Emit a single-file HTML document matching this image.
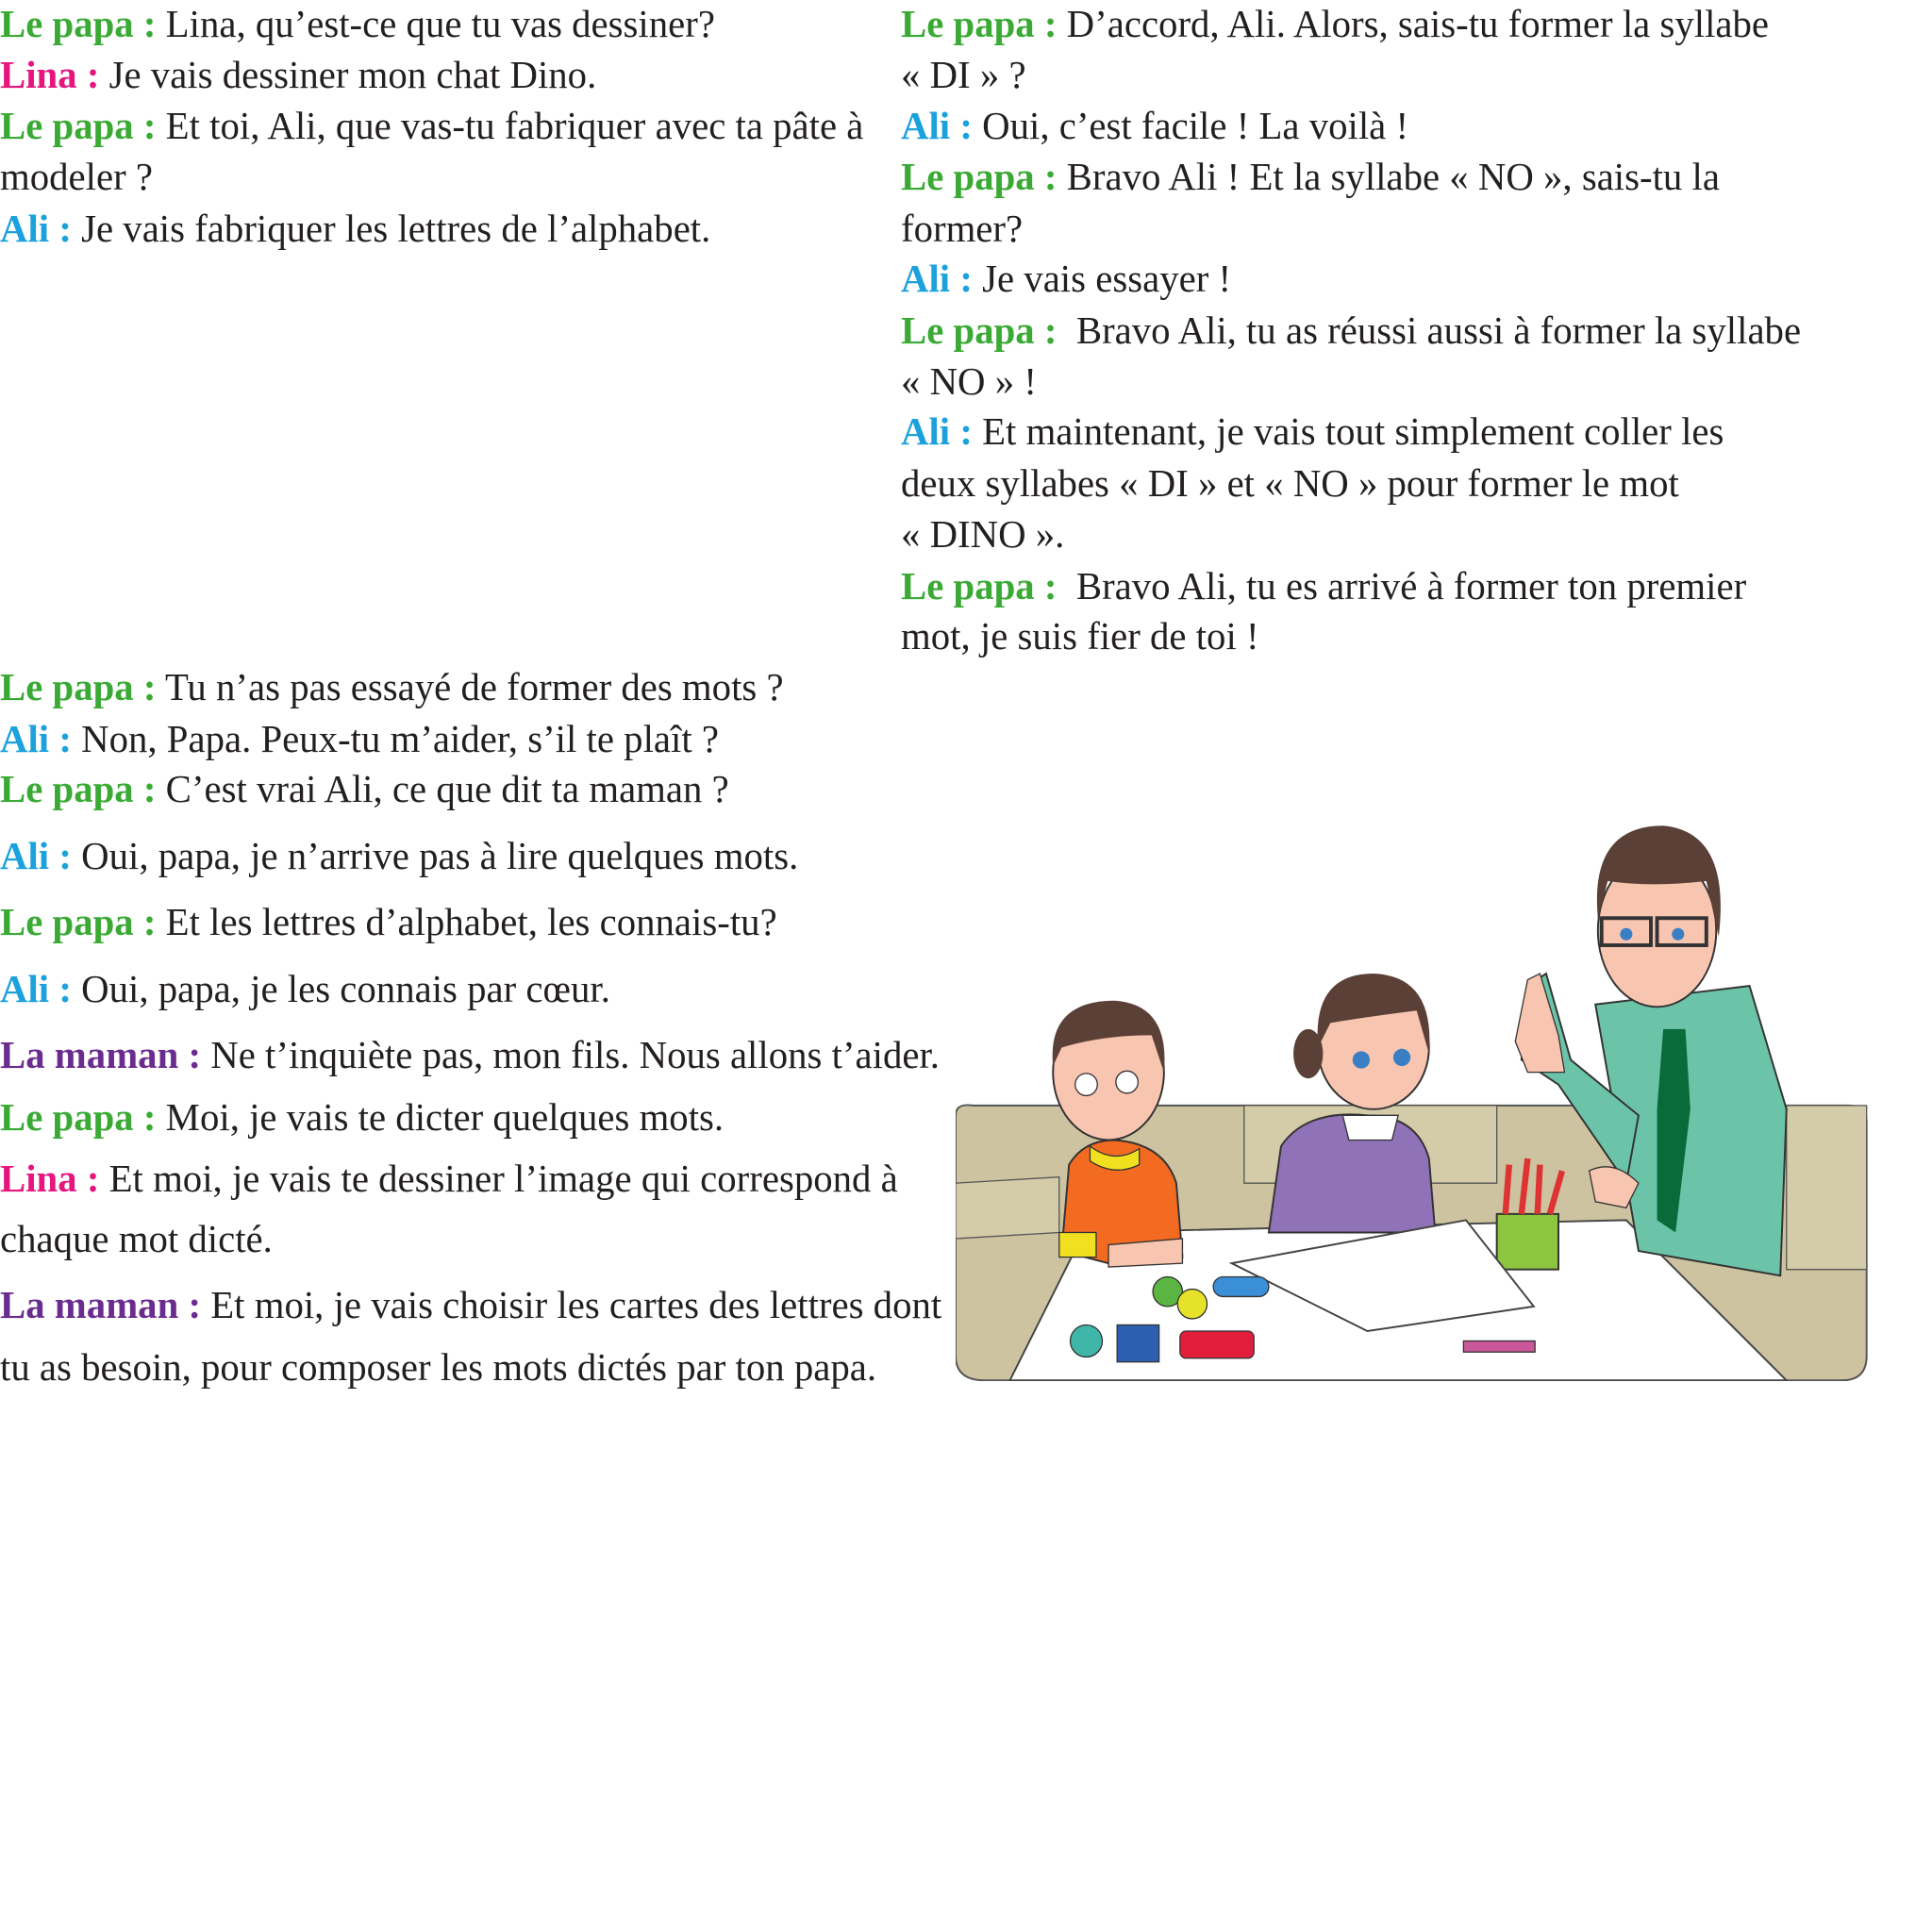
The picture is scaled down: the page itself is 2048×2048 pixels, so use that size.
<!DOCTYPE html>
<html><head><meta charset="utf-8"><style>
html,body{margin:0;padding:0;background:#fff;width:2048px;height:2048px;overflow:hidden;position:relative}
.l{position:absolute;font-family:"Liberation Serif",serif;font-size:40.8px;line-height:40px;white-space:nowrap;color:#231f20}
b{font-weight:bold}
.g{color:#3aaa35}.p{color:#e5177e}.b{color:#1ba1dc}.v{color:#6b2c8f}
</style></head><body>
<div class="l" style="left:0;top:6px"><b class="g">Le papa :</b> Lina, qu’est-ce que tu vas dessiner?</div>
<div class="l" style="left:0;top:60px"><b class="p">Lina :</b> Je vais dessiner mon chat Dino.</div>
<div class="l" style="left:0;top:114px"><b class="g">Le papa :</b> Et toi, Ali, que vas-tu fabriquer avec ta pâte à</div>
<div class="l" style="left:0;top:168px">modeler ?</div>
<div class="l" style="left:0;top:223px"><b class="b">Ali :</b> Je vais fabriquer les lettres de l’alphabet.</div>

<div class="l" style="left:955px;top:6px"><b class="g">Le papa :</b> D’accord, Ali. Alors, sais-tu former la syllabe</div>
<div class="l" style="left:955px;top:60px">« DI » ?</div>
<div class="l" style="left:955px;top:114px"><b class="b">Ali :</b> Oui, c’est facile ! La voilà !</div>
<div class="l" style="left:955px;top:168px"><b class="g">Le papa :</b> Bravo Ali ! Et la syllabe « NO », sais-tu la</div>
<div class="l" style="left:955px;top:223px">former?</div>
<div class="l" style="left:955px;top:276px"><b class="b">Ali :</b> Je vais essayer !</div>
<div class="l" style="left:955px;top:331px"><b class="g">Le papa :</b>&nbsp; Bravo Ali, tu as réussi aussi à former la syllabe</div>
<div class="l" style="left:955px;top:385px">« NO » !</div>
<div class="l" style="left:955px;top:438px"><b class="b">Ali :</b> Et maintenant, je vais tout simplement coller les</div>
<div class="l" style="left:955px;top:493px">deux syllabes « DI » et « NO » pour former le mot</div>
<div class="l" style="left:955px;top:547px">« DINO ».</div>
<div class="l" style="left:955px;top:602px"><b class="g">Le papa :</b>&nbsp; Bravo Ali, tu es arrivé à former ton premier</div>
<div class="l" style="left:955px;top:655px">mot, je suis fier de toi !</div>

<div class="l" style="left:0;top:709px"><b class="g">Le papa :</b> Tu n’as pas essayé de former des mots ?</div>
<div class="l" style="left:0;top:764px"><b class="b">Ali :</b> Non, Papa. Peux-tu m’aider, s’il te plaît ?</div>
<div class="l" style="left:0;top:817px"><b class="g">Le papa :</b> C’est vrai Ali, ce que dit ta maman ?</div>
<div class="l" style="left:0;top:888px"><b class="b">Ali :</b> Oui, papa, je n’arrive pas à lire quelques mots.</div>
<div class="l" style="left:0;top:958px"><b class="g">Le papa :</b> Et les lettres d’alphabet, les connais-tu?</div>
<div class="l" style="left:0;top:1029px"><b class="b">Ali :</b> Oui, papa, je les connais par cœur.</div>
<div class="l" style="left:0;top:1099px"><b class="v">La maman :</b> Ne t’inquiète pas, mon fils. Nous allons t’aider.</div>
<div class="l" style="left:0;top:1165px"><b class="g">Le papa :</b> Moi, je vais te dicter quelques mots.</div>
<div class="l" style="left:0;top:1230px"><b class="p">Lina :</b> Et moi, je vais te dessiner l’image qui correspond à</div>
<div class="l" style="left:0;top:1294px">chaque mot dicté.</div>
<div class="l" style="left:0;top:1364px"><b class="v">La maman :</b> Et moi, je vais choisir les cartes des lettres dont</div>
<div class="l" style="left:0;top:1430px">tu as besoin, pour composer les mots dictés par ton papa.</div>

<svg style="position:absolute;left:1013px;top:868px" width="967" height="596" viewBox="776 665 740 455">
<path d="M776 905 Q776 895 790 897 L1500 897 Q1515 897 1515 910 L1515 1100 Q1515 1120 1495 1120 L800 1120 Q776 1120 776 1100Z" fill="#cdc3a0" stroke="#555" stroke-width="1.5"/>
<path d="M1010 897 L1215 897 L1215 960 L1010 960Z" fill="#d4cba9" stroke="#555"/>
<path d="M776 960 L860 955 L860 1000 L776 1005Z" fill="#d4cba9" stroke="#555"/>
<path d="M1450 897 L1515 897 L1515 1030 L1450 1030Z" fill="#d4cba9" stroke="#555"/>
<path d="M880 1000 L1320 990 L1450 1120 L820 1120Z" fill="#fff" stroke="#444" stroke-width="1.5"/>
<path d="M1295 815 L1420 800 L1450 900 L1445 1035 L1330 1015 L1310 900Z" fill="#6cc4a8" stroke="#333" stroke-width="1.5"/>
<path d="M1350 835 L1368 835 L1372 900 L1360 1000 L1345 990 L1345 900Z" fill="#0a6b3a"/>
<path d="M1240 800 L1255 790 L1275 860 L1330 905 L1320 960 L1265 880 L1235 860Z" fill="#6cc4a8" stroke="#333" stroke-width="1.5"/>
<path d="M1240 795 L1250 790 L1265 840 L1270 870 L1240 870 L1230 845Z" fill="#f8c5b0" stroke="#333"/>
<ellipse cx="1345" cy="755" rx="48" ry="62" fill="#f8c5b0" stroke="#333" stroke-width="1.5"/>
<path d="M1297 745 Q1290 670 1350 670 Q1405 675 1395 760 L1385 715 Q1340 720 1305 715Z" fill="#5a4036"/>
<rect x="1300" y="745" width="40" height="22" fill="none" stroke="#333" stroke-width="3"/>
<rect x="1345" y="745" width="40" height="22" fill="none" stroke="#333" stroke-width="3"/>
<path d="M1290 950 Q1310 940 1330 960 L1320 980 L1295 975Z" fill="#f8c5b0" stroke="#333"/>
<path d="M1030 1000 L1040 930 Q1060 900 1110 905 Q1150 905 1160 940 L1165 1000Z" fill="#8f72b8" stroke="#333" stroke-width="1.5"/>
<path d="M1090 905 L1135 905 L1130 925 L1095 925Z" fill="#fff" stroke="#333"/>
<ellipse cx="1115" cy="850" rx="45" ry="50" fill="#f8c5b0" stroke="#333" stroke-width="1.5"/>
<path d="M1070 850 Q1065 790 1115 790 Q1165 792 1160 855 L1150 820 Q1110 825 1080 830Z" fill="#5a4036"/>
<ellipse cx="1062" cy="855" rx="12" ry="20" fill="#5a4036"/>
<path d="M862 1015 L868 945 Q880 925 905 925 Q945 928 955 960 L960 1020 L900 1025Z" fill="#f26b21" stroke="#333" stroke-width="1.5"/>
<path d="M885 930 Q905 945 925 932 L925 945 Q905 955 885 942Z" fill="#f0e020" stroke="#333"/>
<rect x="860" y="1000" width="30" height="20" fill="#f0e020" stroke="#333"/>
<path d="M900 1010 L960 1005 L960 1025 L900 1028Z" fill="#f8c5b0" stroke="#333"/>
<ellipse cx="900" cy="870" rx="45" ry="55" fill="#f8c5b0" stroke="#333" stroke-width="1.5"/>
<path d="M855 865 Q850 812 905 812 Q950 815 945 870 L935 840 Q895 840 862 850Z" fill="#5a4036"/>
<circle cx="882" cy="880" r="9" fill="#fff" stroke="#333"/><circle cx="915" cy="878" r="9" fill="#fff" stroke="#333"/>
<circle cx="1105" cy="860" r="7" fill="#3a7fc4"/><circle cx="1138" cy="858" r="7" fill="#3a7fc4"/>
<circle cx="1320" cy="758" r="5" fill="#3a7fc4"/><circle cx="1362" cy="758" r="5" fill="#3a7fc4"/>
<rect x="1215" y="985" width="50" height="45" fill="#8cc63f" stroke="#333" stroke-width="1.5"/>
<path d="M1222 985 L1225 945 M1235 985 L1240 940 M1248 985 L1250 945 M1258 985 L1268 950" stroke="#d33" stroke-width="5"/>
<path d="M1000 1025 L1190 990 L1245 1060 L1110 1080Z" fill="#fff" stroke="#444" stroke-width="1.5"/>
<circle cx="948" cy="1048" r="12" fill="#5bb543" stroke="#333"/>
<circle cx="968" cy="1058" r="12" fill="#e6e22b" stroke="#333"/>
<circle cx="882" cy="1088" r="13" fill="#3fb6a8" stroke="#333"/>
<rect x="907" y="1075" width="34" height="30" fill="#2d5fb0" stroke="#333"/>
<rect x="958" y="1080" width="60" height="22" rx="5" fill="#e21e3c" stroke="#333"/>
<rect x="985" y="1036" width="45" height="16" rx="8" fill="#3a8fd6" stroke="#333"/>
<rect x="1188" y="1088" width="58" height="9" fill="#c9579a" stroke="#333"/>
</svg>
</body></html>
